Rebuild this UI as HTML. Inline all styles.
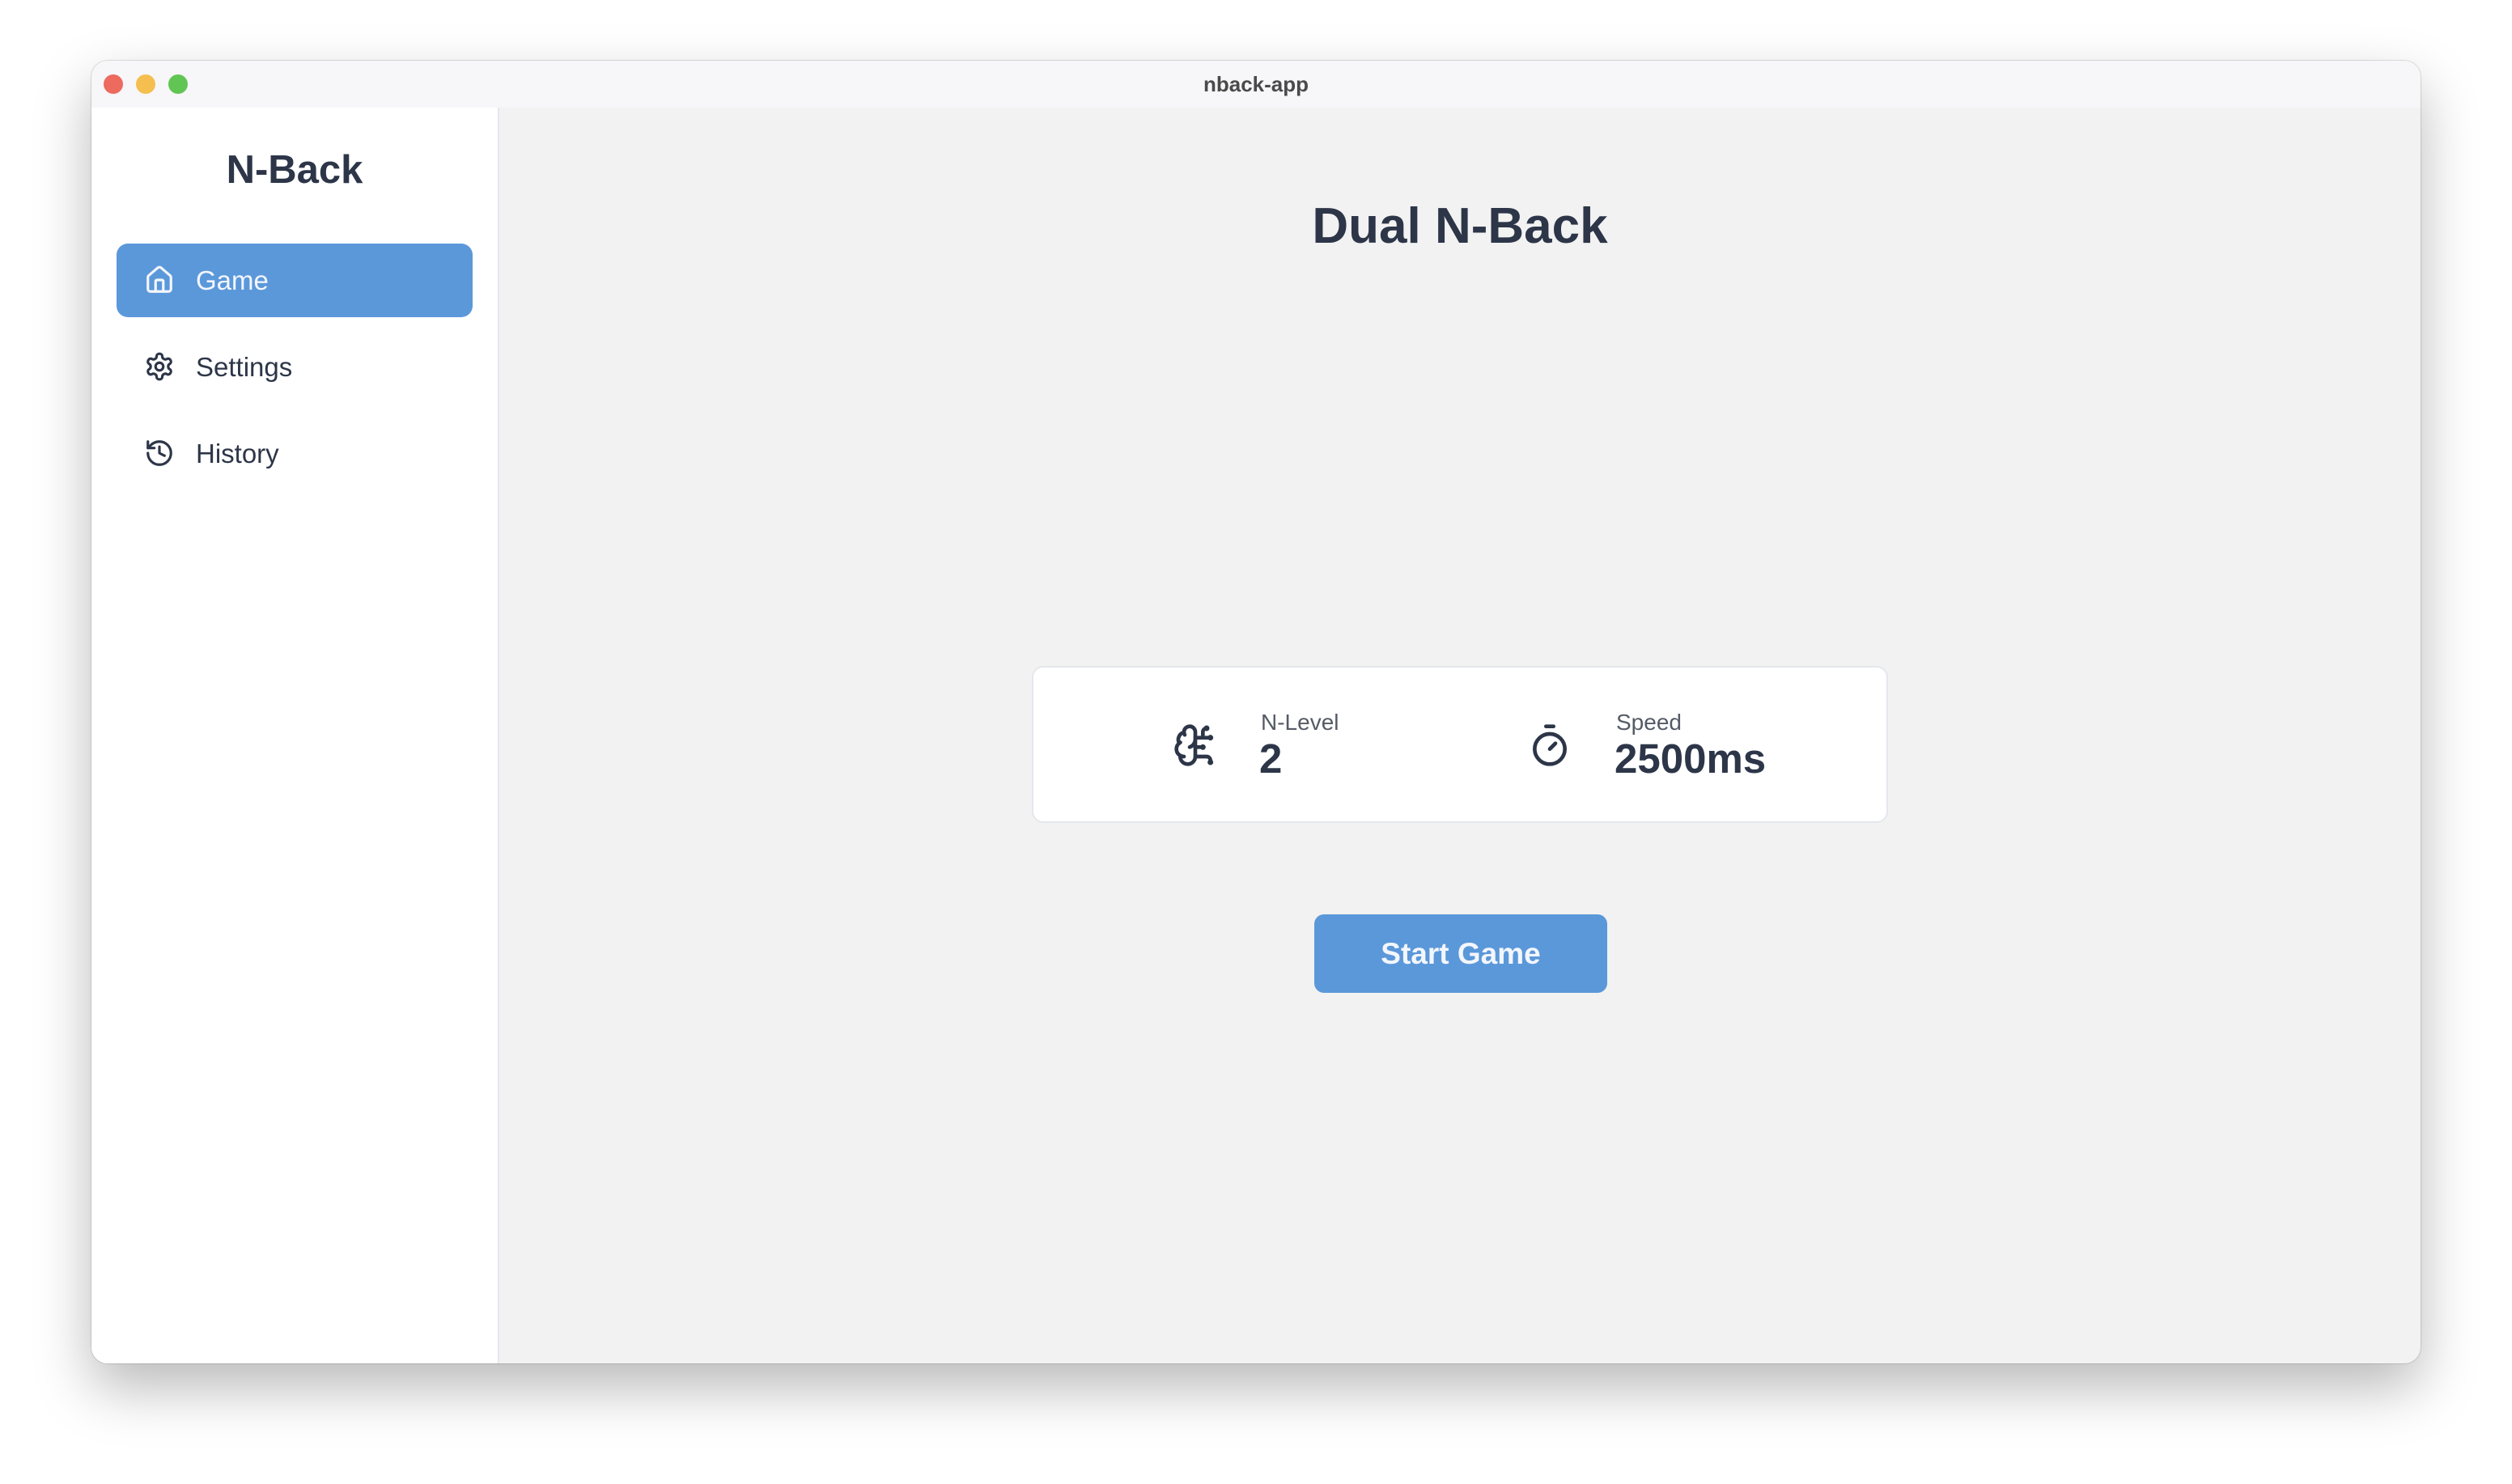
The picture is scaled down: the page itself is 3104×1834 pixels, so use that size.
<!DOCTYPE html>
<html><head><meta charset="utf-8"><style>
*{margin:0;padding:0;box-sizing:border-box}
body{width:3104px;height:1834px;background:#fff;position:relative;overflow:hidden;font-family:"Liberation Sans",sans-serif;color:#2d3648}
.win{position:absolute;left:113px;top:75px;width:2878px;height:1610px;border-radius:20px;overflow:hidden;background:#f2f2f2;box-shadow:0 30px 70px rgba(0,0,0,.28),0 0 0 1px rgba(0,0,0,.12)}
.tb{position:absolute;left:0;top:0;width:100%;height:58px;background:#f7f6f8}
.tl{position:absolute;top:17px;width:24px;height:24px;border-radius:50%}
.ttl{position:absolute;left:0;width:100%;top:14px;text-align:center;font-weight:bold;font-size:26px;color:#4a4a4a}
.sb{position:absolute;left:0;top:58px;width:504px;bottom:0;background:#fff;border-right:2px solid #e4e7ec}
.logo{position:absolute;left:0;width:502px;top:49px;text-align:center;font-weight:bold;font-size:49px;line-height:56px}
.nav{position:absolute;left:31px;width:440px;height:91px;border-radius:14px;font-size:33px;display:flex;align-items:center}
.nav svg{position:absolute;left:34px;top:26px}
.nav span{position:absolute;left:98px}
.act{background:#5b98da;color:#f3f6fb}
.h1{position:absolute;left:504px;right:0;top:168px;text-align:center;font-weight:bold;font-size:62px;line-height:74px}
.card{position:absolute;left:1162px;top:748px;width:1058px;height:194px;background:#fff;border:2px solid #e4e7ec;border-radius:14px}
.lab{position:absolute;font-size:28px;color:#555b66}
.val{position:absolute;font-size:51px;font-weight:bold}
.btn{position:absolute;left:1511px;top:1055px;width:362px;height:97px;background:#5b98da;border-radius:12px;color:#f3f6fb;font-weight:bold;font-size:37px;text-align:center;line-height:97px}
</style></head><body>
<div class="win">
<div class="tb">
<div class="tl" style="left:15px;background:#ec6a5e"></div>
<div class="tl" style="left:55px;background:#f4bf4f"></div>
<div class="tl" style="left:95px;background:#61c554"></div>
<div class="ttl">nback-app</div>
</div>
<div class="sb">
<div class="logo">N-Back</div>
<div class="nav act" style="top:168px"><svg width="38" height="38" viewBox="0 0 24 24" fill="none" stroke="#f3f6fb" stroke-width="2" stroke-linecap="round" stroke-linejoin="round"><path d="M15 21v-8a1 1 0 0 0-1-1h-4a1 1 0 0 0-1 1v8"/><path d="M3 10a2 2 0 0 1 .709-1.528l7-5.999a2 2 0 0 1 2.582 0l7 5.999A2 2 0 0 1 21 10v9a2 2 0 0 1-2 2H5a2 2 0 0 1-2-2z"/></svg><span>Game</span></div>
<div class="nav" style="top:275px"><svg width="38" height="38" viewBox="0 0 24 24" fill="none" stroke="#2d3648" stroke-width="2" stroke-linecap="round" stroke-linejoin="round"><path d="M12.22 2h-.44a2 2 0 0 0-2 2v.18a2 2 0 0 1-1 1.73l-.43.25a2 2 0 0 1-2 0l-.15-.08a2 2 0 0 0-2.730.73l-.22.38a2 2 0 0 0 .73 2.73l.15.1a2 2 0 0 1 1 1.72v.51a2 2 0 0 1-1 1.74l-.15.09a2 2 0 0 0-.73 2.73l.22.38a2 2 0 0 0 2.73.73l.15-.08a2 2 0 0 1 2 0l.43.25a2 2 0 0 1 1 1.73V20a2 2 0 0 0 2 2h.44a2 2 0 0 0 2-2v-.18a2 2 0 0 1 1-1.73l.43-.25a2 2 0 0 1 2 0l.15.08a2 2 0 0 0 2.73-.73l.22-.39a2 2 0 0 0-.73-2.73l-.15-.08a2 2 0 0 1-1-1.740v-.5a2 2 0 0 1 1-1.74l.15-.09a2 2 0 0 0 .73-2.73l-.22-.38a2 2 0 0 0-2.73-.73l-.15.08a2 2 0 0 1-2 0l-.43-.25a2 2 0 0 1-1-1.73V4a2 2 0 0 0-2-2z"/><circle cx="12" cy="12" r="3"/></svg><span>Settings</span></div>
<div class="nav" style="top:382px"><svg width="38" height="38" viewBox="0 0 24 24" fill="none" stroke="#2d3648" stroke-width="2" stroke-linecap="round" stroke-linejoin="round"><path d="M3 12a9 9 0 1 0 9-9 9.75 9.75 0 0 0-6.74 2.74L3 8"/><path d="M3 3v5h5"/><path d="M12 7v5l4 2"/></svg><span>History</span></div>
</div>
<div class="h1">Dual N-Back</div>
<div class="card">
<svg style="position:absolute;left:172px;top:68px" width="56" height="56" viewBox="0 0 24 24" fill="none" stroke="#2d3648" stroke-width="2" stroke-linecap="round" stroke-linejoin="round"><path d="M12 5a3 3 0 1 0-5.997.125 4 4 0 0 0-2.526 5.77 4 4 0 0 0 .556 6.588A4 4 0 1 0 12 18Z"/><path d="M9 13a4.5 4.5 0 0 0 3-4"/><path d="M6.003 5.125A3 3 0 0 0 6.401 6.5"/><path d="M3.477 10.896a4 4 0 0 1 .585-.396"/><path d="M6 18a4 4 0 0 1-1.967-.516"/><path d="M12 13h4"/><path d="M12 18h6a2 2 0 0 1 2 2v1"/><path d="M12 8h8"/><path d="M16 8V5a2 2 0 0 1 2-2"/><circle cx="16" cy="13" r=".5"/><circle cx="18" cy="3" r=".5"/><circle cx="20" cy="21" r=".5"/><circle cx="20" cy="8" r=".5"/></svg>
<div class="lab" style="left:281px;top:52px">N-Level</div>
<div class="val" style="left:279px;top:83px">2</div>
<svg style="position:absolute;left:610px;top:68px" width="56" height="56" viewBox="0 0 24 24" fill="none" stroke="#2d3648" stroke-width="2" stroke-linecap="round" stroke-linejoin="round"><line x1="10" x2="14" y1="2" y2="2"/><line x1="12" x2="15" y1="14" y2="11"/><circle cx="12" cy="14" r="8"/></svg>
<div class="lab" style="left:720px;top:52px">Speed</div>
<div class="val" style="left:718px;top:83px">2500ms</div>
</div>
<div class="btn">Start Game</div>
</div>
</body></html>
